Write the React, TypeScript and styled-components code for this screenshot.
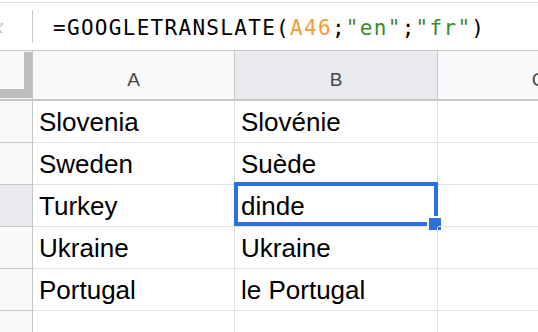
import * as React from 'react';
import styled, { createGlobalStyle } from 'styled-components';

const GlobalStyle = createGlobalStyle`
  html, body {
    margin: 0;
    padding: 0;
    background: #ffffff;
  }
  body {
    width: 538px;
    height: 332px;
    overflow: hidden;
    font-family: "Liberation Sans", Arial, sans-serif;
  }
`

const Sheet = styled.div`
  display: flex;
  flex-direction: column;
  width: 538px;
  height: 332px;
  padding-top: 2px;
  box-sizing: border-box;
  overflow: hidden;
`

const FormulaBar = styled.div`
  display: flex;
  align-items: center;
  height: 49px;
  flex-shrink: 0;
  box-sizing: border-box;
  border-top: 1px solid #dadce0;
  border-bottom: 1px solid #c4c7c5;
`

const FxBox = styled.div`
  width: 32px;
  height: 100%;
  display: flex;
  align-items: center;
  justify-content: flex-end;
  padding-right: 29px;
  box-sizing: border-box;
  overflow: hidden;
  font-family: "Liberation Serif", serif;
  font-style: italic;
  font-size: 20px;
  color: #b0b3b8;
`

const Divider = styled.div`
  width: 1px;
  height: 33px;
  background: #c7c9cc;
`

const Formula = styled.div`
  margin-left: 20px;
  padding-top: 2px;
  font-family: "DejaVu Sans Mono", monospace;
  font-size: 21px;
  line-height: 24px;
  letter-spacing: 1.3px;
  color: #000000;
  white-space: nowrap;
`

const Token = styled.span<{ $kind: 'ref' | 'str' }>`
  color: ${p => (p.$kind === 'ref' ? '#f29b38' : '#3a8a2e')};
`

const Grid = styled.div`
  display: grid;
  grid-template-columns: 33px 202px 203px 202px;
  grid-auto-rows: 42px;
  grid-template-rows: 50px;
`

const Corner = styled.div`
  border-right: 1px solid #c4c7c5;
  border-bottom: 2px solid #c4c7c5;
  background: #f8f9fa;
  box-sizing: border-box;
`

const FreezeBar = styled.div`
  margin-top: 1px;
  width: 32px;
  height: 46px;
  box-sizing: border-box;
  border-right: 8px solid #bdbdbd;
  border-bottom: 9px solid #bdbdbd;
`

const ColHeader = styled.div<{ $active?: boolean }>`
  display: flex;
  align-items: flex-end;
  justify-content: center;
  padding-bottom: 9px;
  box-sizing: border-box;
  background: ${p => (p.$active ? '#e8eaed' : '#f8f9fa')};
  border-right: 1px solid #c4c7c5;
  border-bottom: 2px solid #c4c7c5;
  font-size: 19px;
  line-height: 20px;
  color: #444746;
`

const RowHeader = styled.div<{ $active?: boolean }>`
  background: ${p => (p.$active ? '#e8eaed' : '#f8f9fa')};
  border-right: 1px solid #c4c7c5;
  border-bottom: 1px solid #c4c7c5;
  box-sizing: border-box;
`

const Cell = styled.div`
  position: relative;
  display: flex;
  align-items: flex-end;
  padding: 0 0 5px 6px;
  box-sizing: border-box;
  border-right: 1px solid #e2e2e3;
  border-bottom: 1px solid #e2e2e3;
  font-size: 26px;
  line-height: 30px;
  color: #000000;
  white-space: nowrap;
`

const Selection = styled.div`
  position: absolute;
  top: -3px;
  left: -1px;
  right: -1px;
  height: 44px;
  box-sizing: border-box;
  border: 4px solid #2d6fdd;
  pointer-events: none;
`

const FillHandle = styled.div`
  position: absolute;
  right: -9px;
  bottom: -10px;
  width: 12px;
  height: 12px;
  background: #2d6fdd;
  border: 2px solid #ffffff;
`

const rows: [string, string][] = [
  ['Slovenia', 'Slovénie'],
  ['Sweden', 'Suède'],
  ['Turkey', 'dinde'],
  ['Ukraine', 'Ukraine'],
  ['Portugal', 'le Portugal'],
  ['', ''],
]

const selectedRow = 2

const App: React.FunctionComponent = () => {
  return (
    <>
      <GlobalStyle />
      <Sheet>
        <FormulaBar>
          <FxBox>fx</FxBox>
          <Divider />
          <Formula>
            =GOOGLETRANSLATE(<Token $kind='ref'>A46</Token>;<Token $kind='str'>"en"</Token>;<Token $kind='str'>"fr"</Token>)
          </Formula>
        </FormulaBar>

        <Grid>
          <Corner>
            <FreezeBar />
          </Corner>
          <ColHeader>A</ColHeader>
          <ColHeader $active>B</ColHeader>
          <ColHeader>C</ColHeader>

          {rows.map(([en, fr], i) => (
            <React.Fragment key={i}>
              <RowHeader $active={i === selectedRow} />
              <Cell>{en}</Cell>
              <Cell>
                {fr}
                {i === selectedRow &&
                  <Selection>
                    <FillHandle />
                  </Selection>
                }
              </Cell>
              <Cell />
            </React.Fragment>
          ))}
        </Grid>
      </Sheet>
    </>
  );
};

export default App;
